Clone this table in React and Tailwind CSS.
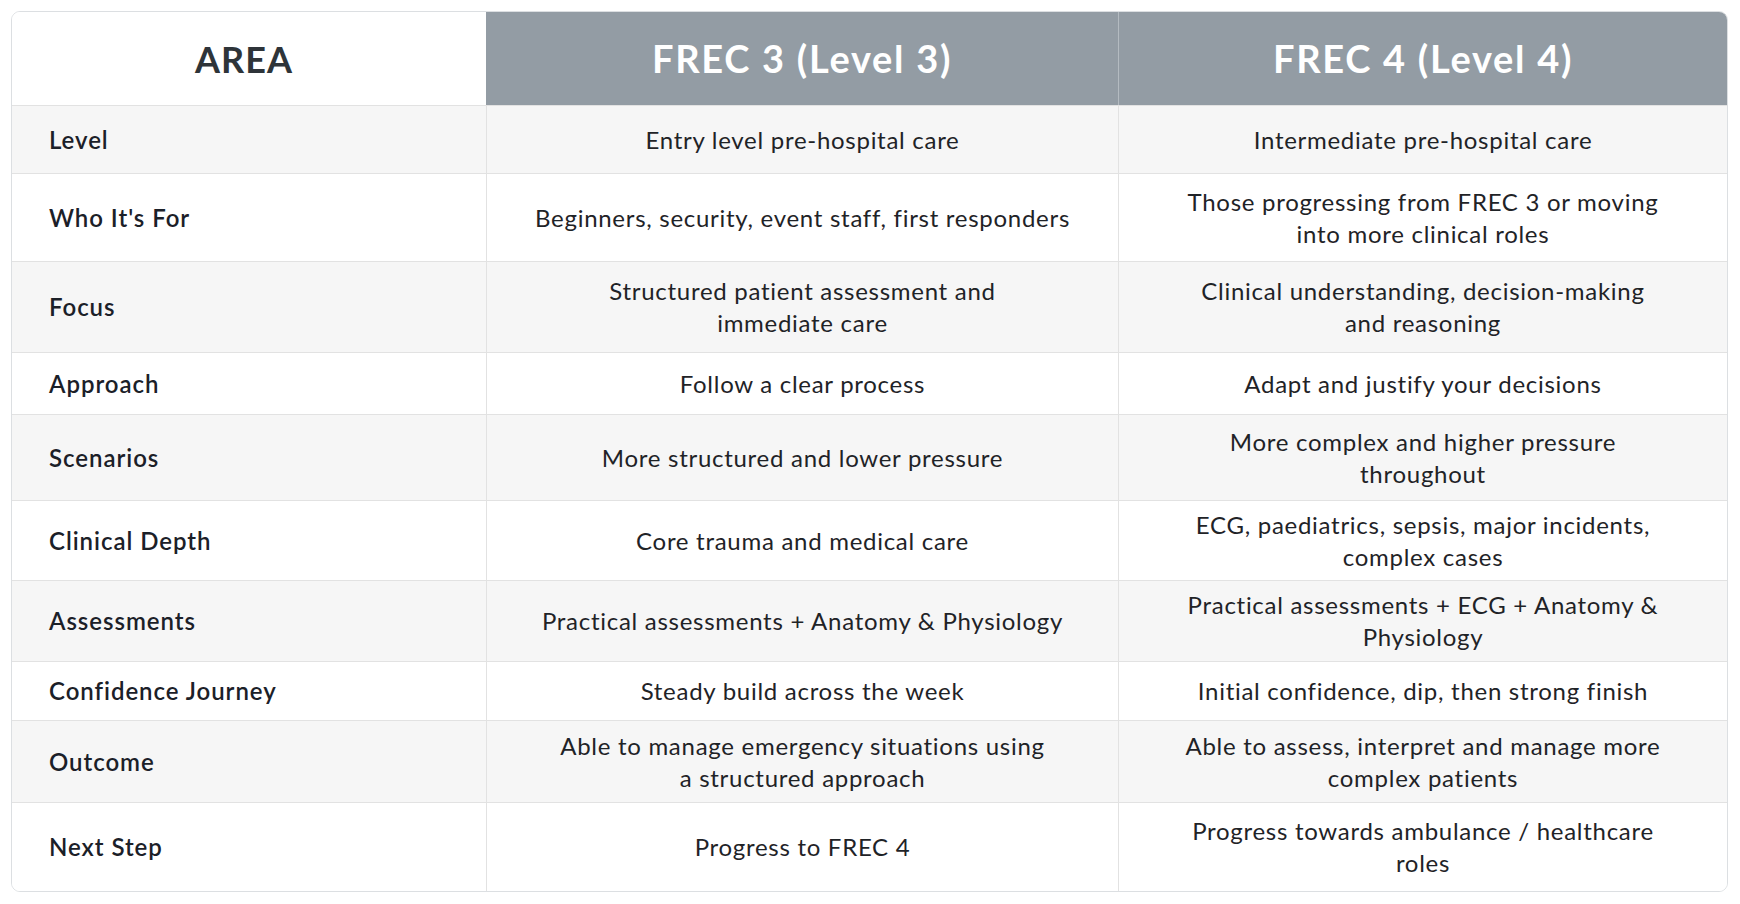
import React from 'react';

const rows = [
  { area: 'Level', h: 'h-[68px]', frec3: ['Entry level pre-hospital care'], frec4: ['Intermediate pre-hospital care'] },
  {
    area: "Who It's For",
    h: 'h-[88px]',
    frec3: ['Beginners, security, event staff, first responders'],
    frec4: ['Those progressing from FREC 3 or moving', 'into more clinical roles'],
  },
  {
    area: 'Focus',
    h: 'h-[91px]',
    frec3: ['Structured patient assessment and', 'immediate care'],
    frec4: ['Clinical understanding, decision-making', 'and reasoning'],
  },
  { area: 'Approach', h: 'h-[62px]', frec3: ['Follow a clear process'], frec4: ['Adapt and justify your decisions'] },
  {
    area: 'Scenarios',
    h: 'h-[86px]',
    frec3: ['More structured and lower pressure'],
    frec4: ['More complex and higher pressure', 'throughout'],
  },
  {
    area: 'Clinical Depth',
    h: 'h-[80px]',
    frec3: ['Core trauma and medical care'],
    frec4: ['ECG, paediatrics, sepsis, major incidents,', 'complex cases'],
  },
  {
    area: 'Assessments',
    h: 'h-[81px]',
    frec3: ['Practical assessments + Anatomy & Physiology'],
    frec4: ['Practical assessments + ECG + Anatomy &', 'Physiology'],
  },
  {
    area: 'Confidence Journey',
    h: 'h-[59px]',
    frec3: ['Steady build across the week'],
    frec4: ['Initial confidence, dip, then strong finish'],
  },
  {
    area: 'Outcome',
    h: 'h-[82px]',
    frec3: ['Able to manage emergency situations using', 'a structured approach'],
    frec4: ['Able to assess, interpret and manage more', 'complex patients'],
  },
  {
    area: 'Next Step',
    h: 'h-[89px]',
    frec3: ['Progress to FREC 4'],
    frec4: ['Progress towards ambulance / healthcare', 'roles'],
  },
];

const Lines = ({ lines }) => (
  <p className="text-center text-[24px] leading-[32px] tracking-[0.03em] text-[#1f2327]">
    {lines.map((line, i) => (
      <React.Fragment key={i}>
        {i > 0 && <br />}
        {line}
      </React.Fragment>
    ))}
  </p>
);

export default function App() {
  return (
    <div className="min-h-screen bg-white p-[11px] font-['Lato',sans-serif]">
      <div className="w-[1717px] overflow-hidden rounded-[9px] border border-[#dcdfe2]">
        {/* header */}
        <div className="grid h-[93px] grid-cols-[474px_632px_1fr]">
          <div className="flex items-center justify-center bg-white pr-[10px]">
            <span className="text-[36px] font-bold tracking-[0.03em] text-[#2e3439]">AREA</span>
          </div>
          <div className="flex items-center justify-center bg-[#939ca4]">
            <span className="text-[38px] font-bold tracking-[0.045em] text-white">FREC 3 (Level 3)</span>
          </div>
          <div className="flex items-center justify-center border-l border-[#b4bbc1] bg-[#939ca4]">
            <span className="text-[38px] font-bold tracking-[0.045em] text-white">FREC 4 (Level 4)</span>
          </div>
        </div>

        {rows.map((row, i) => (
          <div
            key={row.area}
            className={`grid grid-cols-[474px_632px_1fr] border-t border-[#e2e2e2] ${row.h} ${
              i % 2 === 0 ? 'bg-[#f6f6f6]' : 'bg-white'
            }`}
          >
            <div className="flex items-center pl-[37px]">
              <span className="text-[24px] font-semibold tracking-[0.04em] text-[#1b2028]">{row.area}</span>
            </div>
            <div className="flex items-center justify-center border-l border-[#e2e2e2]">
              <Lines lines={row.frec3} />
            </div>
            <div className="flex items-center justify-center border-l border-[#e2e2e2]">
              <Lines lines={row.frec4} />
            </div>
          </div>
        ))}
      </div>
    </div>
  );
}
